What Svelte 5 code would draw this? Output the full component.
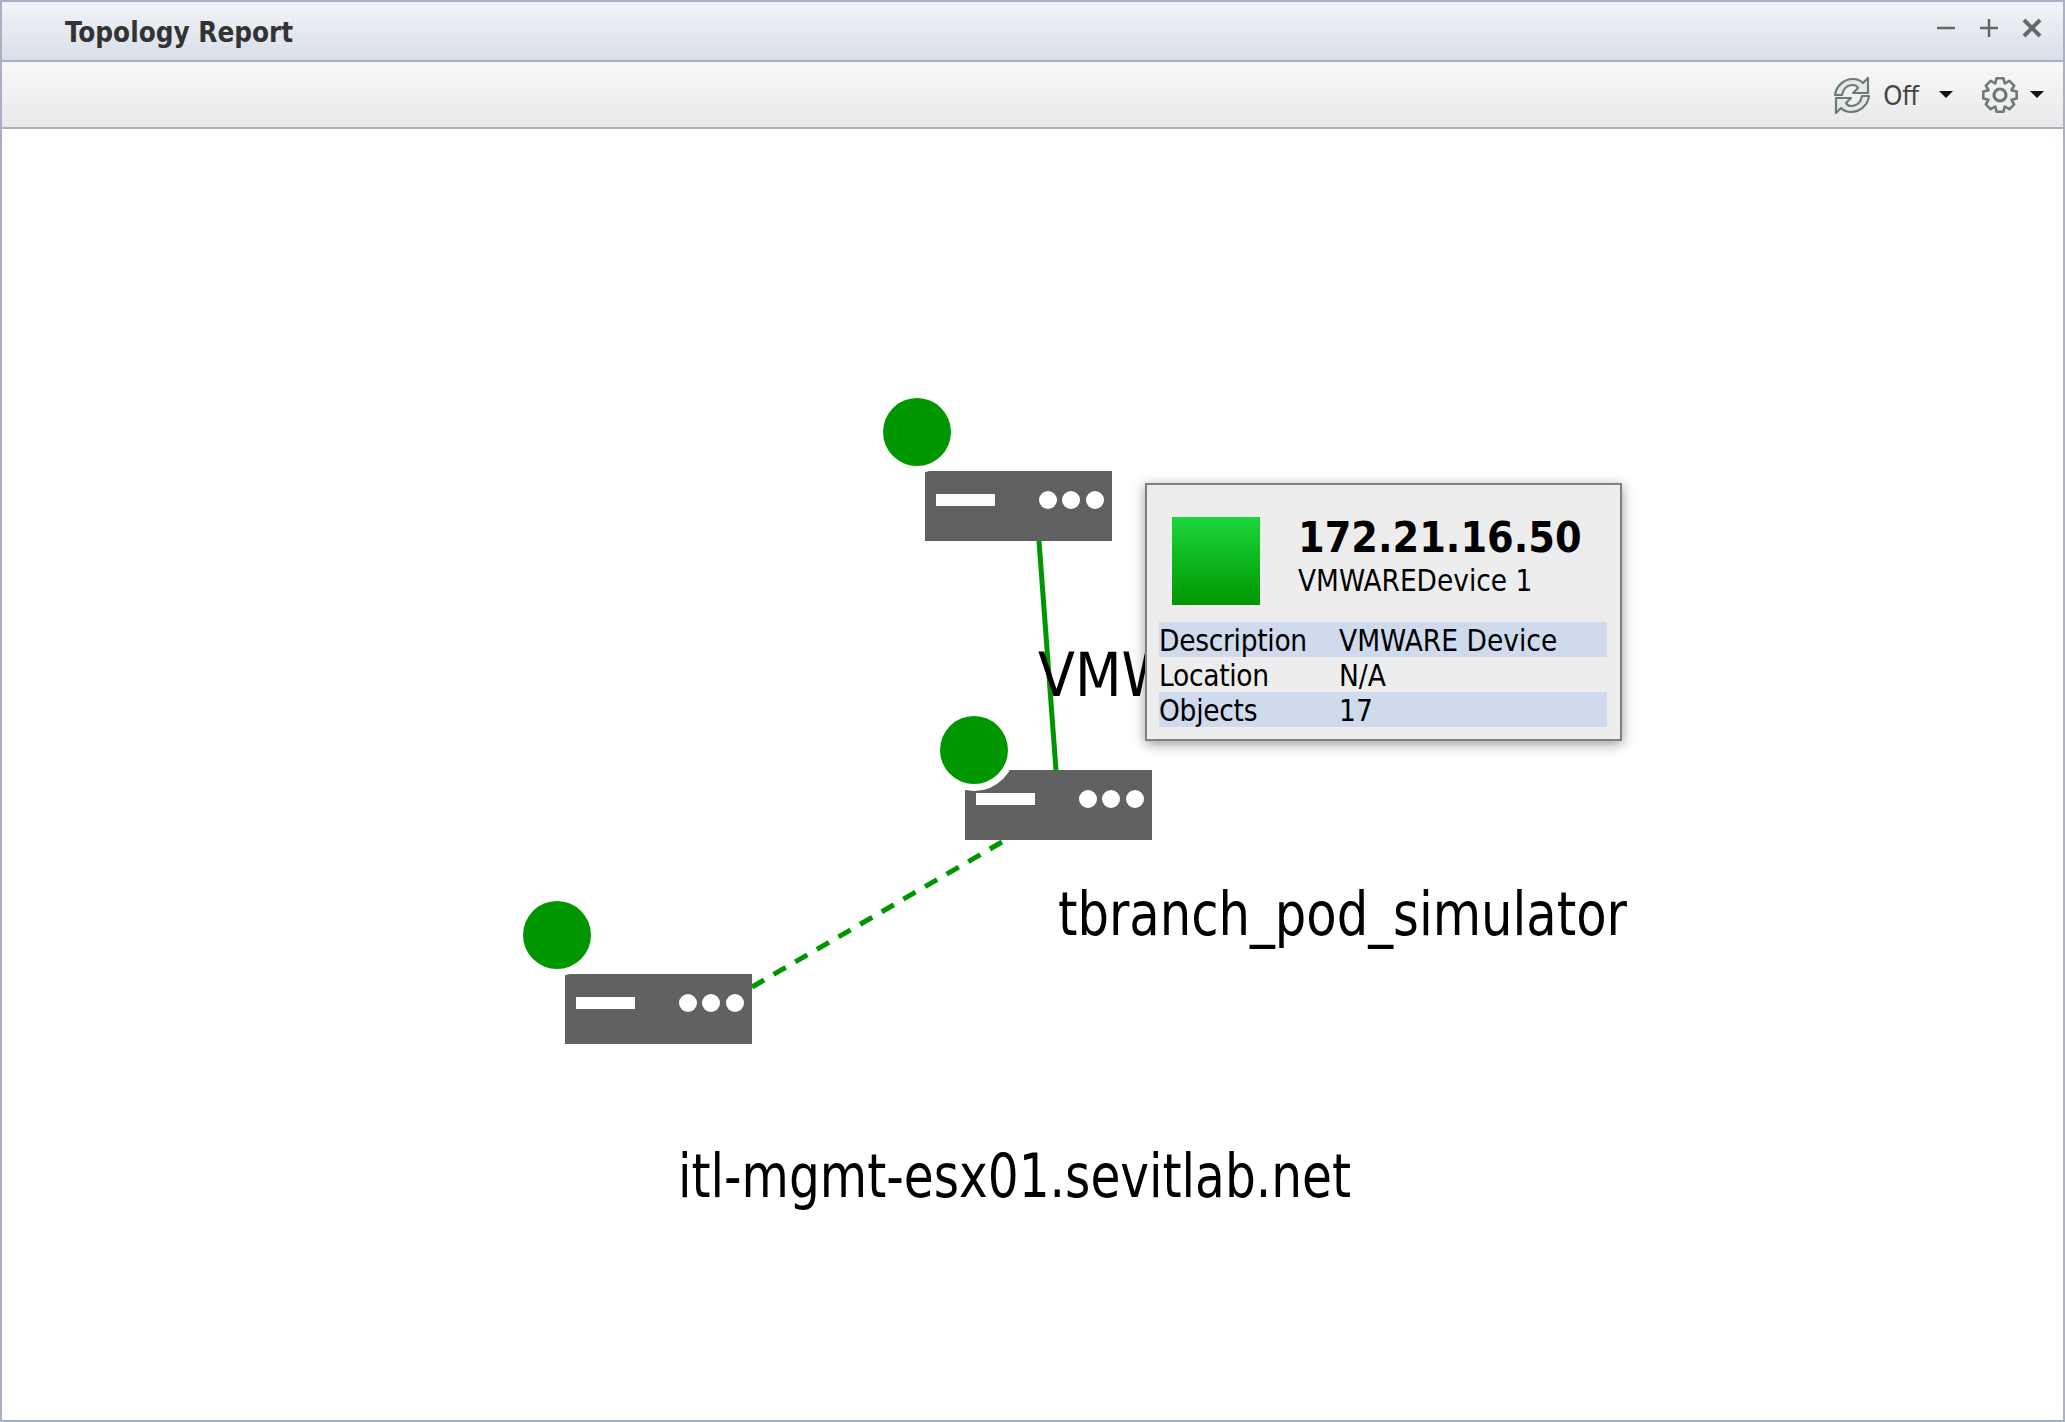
<script>
	const nodes = [
		{ x: 925, y: 471, cx: 917, cy: 432 },
		{ x: 965, y: 770, cx: 974, cy: 750 },
		{ x: 565, y: 974, cx: 557, cy: 935 }
	];
	const labels = [
		{ text: 'VMWAREDevice 1', x: 1038, y: 696 },
		{ text: 'tbranch_pod_simulator', x: 1058, y: 935, width: 569 },
		{ text: 'itl-mgmt-esx01.sevitlab.net', x: 678, y: 1197, width: 673 }
	];
	const rows = [
		['Description', 'VMWARE Device'],
		['Location', 'N/A'],
		['Objects', '17']
	];

	// 8 lobed gear outline for the settings button
	function gearPath(c, outer, inner) {
		let d = '';
		for (let i = 0; i < 8; i++) {
			const a = (i * Math.PI) / 4;
			const pts = [
				[inner, a - 0.39],
				[outer, a - 0.2],
				[outer, a + 0.2],
				[inner, a + 0.39]
			];
			for (const [r, t] of pts) {
				const x = (c + r * Math.sin(t)).toFixed(1);
				const y = (c - r * Math.cos(t)).toFixed(1);
				d += (d ? 'L' : 'M') + x + ' ' + y;
			}
		}
		return d + 'Z';
	}
</script>

<div class="window">
	<header class="titlebar">
		<span class="title">Topology Report</span>
		<div class="win-buttons">
			<svg width="20" height="20" viewBox="0 0 20 20"><path d="M1 10h18" /></svg>
			<svg width="20" height="20" viewBox="0 0 20 20"><path d="M1 10h18M10 1v18" /></svg>
			<svg width="20" height="20" viewBox="0 0 20 20"><path class="thick" d="M2 2l16 16M18 2L2 18" /></svg>
		</div>
	</header>

	<div class="toolbar">
		<svg class="refresh" width="38" height="38" viewBox="0 0 38 38">
			<path d="M2 19C3 10 11 3 20 3c4 0 7 1 10 4l5-5v15H20l5-5c-1-2-3-3-5-3-6 0-10 4-11 10z" />
			<path transform="rotate(180 19 19.5)" d="M2 19C3 10 11 3 20 3c4 0 7 1 10 4l5-5v15H20l5-5c-1-2-3-3-5-3-6 0-10 4-11 10z" />
		</svg>
		<span class="off">Off</span>
		<i class="caret first"></i>
		<svg class="gear" width="38" height="38" viewBox="0 0 38 38">
			<path stroke-linejoin="round" d={gearPath(19, 17, 12.5)} />
			<circle cx="19" cy="19" r="6" />
		</svg>
		<i class="caret"></i>
	</div>

	<main class="canvas">
		<svg class="topology" width="2061" height="1291" viewBox="2 129 2061 1291">
			<line x1="1039" y1="541" x2="1056" y2="770" stroke="#009600" stroke-width="5" />
			<line x1="752" y1="987" x2="1002" y2="842" stroke="#009600" stroke-width="5" stroke-dasharray="14 11" />
			{#each nodes as n}
				<rect x={n.x} y={n.y} width="187" height="70" fill="#616161" />
				<rect x={n.x + 11} y={n.y + 23} width="59" height="12" fill="#fff" />
				<circle cx={n.x + 123} cy={n.y + 29} r="9" fill="#fff" />
				<circle cx={n.x + 146} cy={n.y + 29} r="9" fill="#fff" />
				<circle cx={n.x + 170} cy={n.y + 29} r="9" fill="#fff" />
				<circle cx={n.cx} cy={n.cy} r="41" fill="#fff" />
				<circle cx={n.cx} cy={n.cy} r="34" fill="#009600" />
			{/each}
			{#each labels as l}
				<text class="label" x={l.x} y={l.y} textLength={l.width} lengthAdjust={l.width ? 'spacingAndGlyphs' : undefined}>{l.text}</text>
			{/each}
		</svg>

		<aside class="tooltip">
			<div class="head">
				<div class="swatch"></div>
				<div class="names">
					<div class="ip">172.21.16.50</div>
					<div class="device">VMWAREDevice 1</div>
				</div>
			</div>
			<table>
				<tbody>
					{#each rows as [k, v], i}
						<tr class:alt={i % 2 === 0}>
							<td class="key">{k}</td>
							<td>{v}</td>
						</tr>
					{/each}
				</tbody>
			</table>
		</aside>
	</main>
</div>

<style>
	:global(body) {
		margin: 0;
		background: #fff;
	}

	.window {
		box-sizing: border-box;
		width: 2065px;
		height: 1422px;
		border: 2px solid #a9b0c3;
		display: flex;
		flex-direction: column;
		font-family: 'DejaVu Sans', sans-serif;
		font-stretch: condensed;
		overflow: hidden;
	}

	.titlebar {
		height: 60px;
		box-sizing: border-box;
		flex: none;
		display: flex;
		align-items: center;
		justify-content: space-between;
		padding: 0 21px 0 63px;
		background: linear-gradient(#f1f4f8, #d9dfe8);
		border-bottom: 2px solid #a9b0c3;
	}

	.title {
		font-weight: bold;
		font-size: 27.6px;
		color: #333;
		margin-top: 2px;
	}

	.win-buttons {
		display: flex;
		gap: 23px;
		margin-top: -6px;
	}

	.win-buttons path {
		stroke: #666;
		stroke-width: 2.5;
		fill: none;
	}

	.win-buttons path.thick {
		stroke-width: 4;
	}

	.toolbar {
		height: 67px;
		box-sizing: border-box;
		flex: none;
		display: flex;
		align-items: center;
		justify-content: flex-end;
		padding-right: 19px;
		background: linear-gradient(#f8f8f8, #e9e9e9);
		border-bottom: 2px solid #a9b0c3;
	}

	.refresh path {
		fill: #e6e9e9;
		stroke: #6a7a79;
		stroke-width: 2.2;
		stroke-linejoin: round;
	}

	.gear path,
	.gear circle {
		fill: none;
		stroke: #6a7a79;
		stroke-width: 2.6;
	}

	.gear circle {
		stroke-width: 3.2;
	}

	.off {
		font-size: 27px;
		color: #444;
		margin: 2px 0 0 12px;
	}

	.caret {
		width: 0;
		height: 0;
		border: 7px solid transparent;
		border-top: 7px solid #111;
		border-bottom: 0;
		margin-left: 11px;
	}

	.caret.first {
		margin-left: 20px;
		margin-right: 28px;
	}

	.canvas {
		flex: 1;
		position: relative;
		background: #fff;
	}

	.topology {
		display: block;
	}

	.label {
		font-size: 60px;
		fill: #000;
	}

	.tooltip {
		position: absolute;
		left: 1143px;
		top: 354px;
		box-sizing: border-box;
		width: 477px;
		height: 258px;
		background: #ededed;
		border: 2px solid #808080;
		box-shadow: 0 3px 12px rgba(0, 0, 0, 0.4);
		padding: 32px 12px 0;
		color: #000;
	}

	.head {
		display: flex;
		align-items: flex-start;
		gap: 38px;
		padding-left: 13px;
		height: 105px;
	}

	.swatch {
		width: 88px;
		height: 88px;
		flex: none;
		background: linear-gradient(#1bd73a, #009600);
	}

	.ip {
		font-size: 42.6px;
		font-weight: bold;
		line-height: 40px;
	}

	.device {
		font-size: 29.4px;
		line-height: 40px;
		margin-top: 4px;
	}

	table {
		width: 448px;
		border-collapse: collapse;
		font-size: 29.5px;
	}

	tr {
		height: 35px;
	}

	tr.alt {
		background: #cfdbed;
	}

	td {
		padding: 3px 0 0;
		height: 32px;
		line-height: 32px;
		white-space: nowrap;
	}

	td.key {
		width: 180px;
		letter-spacing: -0.3px;
	}
</style>
